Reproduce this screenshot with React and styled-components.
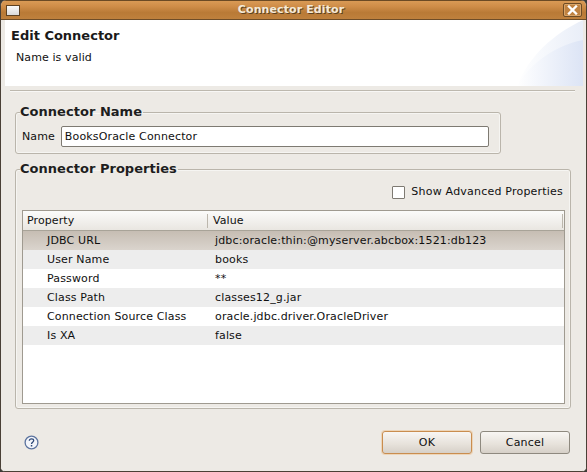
import React from 'react';
import styled, { createGlobalStyle } from 'styled-components';

const Global = createGlobalStyle`
  html, body { margin: 0; padding: 0; background: #3c3b37; }
  * { box-sizing: border-box; }
`;

const Window = styled.div`
  width: 587px; height: 472px; display: flex; flex-direction: column;
  background: #edeae5; font: 11px/14px "DejaVu Sans", sans-serif; color: #101010;
  border-radius: 6px 6px 5px 5px; overflow: hidden;
  border: 1px solid #4a4036; border-top: 0;
`;
const TitleBar = styled.header`
  height: 20px; flex: none; display: flex; align-items: center; justify-content: space-between;
  padding: 0 4px 0 5px; position: relative;
  background: linear-gradient(#d99a55 0, #cf8d48 30%, #b97a36 65%, #bf813d 100%);
  border-top: 1px solid #6b4a24; border-bottom: 1px solid #6e4d28;
`;
const MenuBox = styled.div`
  width: 14px; height: 11px; background: linear-gradient(#fafafa, #d9d9d9); border: 1px solid #5e4222;
`;
const CloseBox = styled.div`
  width: 19px; height: 14px; border: 1px solid #6e4c26; border-radius: 2px; background: #c08240;
  box-shadow: inset 0 0 0 1px #d8a468; display: flex; align-items: center; justify-content: center;
`;
const Title = styled.div`
  position: absolute; left: -5px; right: 0; text-align: center; font-weight: bold; color: #f4ead8;
  text-shadow: 1px 1px 0 #5e4222; letter-spacing: 0.1px; font-size: 11px; top: 2px;
`;
const Body = styled.div`
  flex: 1; display: flex; flex-direction: column; border-left: 3px solid #edeae5; border-right: 3px solid #edeae5; min-height: 0;
`;
const Banner = styled.section`
  height: 66px; flex: none; margin-left: 1px; background: #fff; padding: 8px 6px; position: relative; overflow: hidden;
`;
const BannerArt = styled.svg`
  position: absolute; right: 0; top: 0;
`;
const Heading = styled.h1`
  margin: 0; font: bold 13px/16px "DejaVu Sans", sans-serif; color: #1a1a1a; letter-spacing: 0; position: relative;
`;
const Message = styled.p`
  margin: 7px 0 0 5px; font-size: 11px; line-height: 14px; position: relative; letter-spacing: 0.1px;
`;
const Rule = styled.hr`
  margin: 4px 0 0 6px; width: 565px; height: 2px; border: 0; border-top: 1px solid #bdb8ae; border-bottom: 1px solid #f8f7f5;
`;
const Content = styled.main`
  flex: 1; display: flex; flex-direction: column; padding: 12px 13px 0 11px; min-height: 0;
`;
const Group = styled.fieldset`
  margin: 0; padding: ${p => p.$pad}; border: 1px solid #bab5ab; border-radius: 3px;
  box-shadow: inset 0 0 0 1px #f6f5f2; min-width: 0; width: ${p => p.$width}px; height: ${p => p.$height}px;
  & + & { margin-top: 7px; }
`;
const Legend = styled.legend`
  padding: 0 1px 0 0; margin-left: 4px; font: bold 13px/16px "DejaVu Sans", sans-serif; color: #1e1e1e; letter-spacing: 0.03px;
`;
const NameRow = styled.div`
  display: flex; align-items: center; gap: 7px; padding: 6px 6px 0;
`;
const NameLabel = styled.label`
  font-size: 11px; letter-spacing: 0.1px;
`;
const NameInput = styled.input`
  width: 428px; height: 21px; padding: 0 3px; margin-left: -1px; font: 11px "DejaVu Sans", sans-serif; color: #101010; letter-spacing: 0.15px;
  border: 1px solid #7e7a72; border-radius: 2px; background: #fff; outline: 0;
`;
const CheckRow = styled.label`
  display: flex; justify-content: flex-end; align-items: center; gap: 6px; padding-right: 7px; height: 14px;
`;
const CheckBox = styled.span`
  width: 13px; height: 13px; background: #fff; border: 1px solid #7e7a72; border-radius: 1px; display: block;
`;
const CheckText = styled.span`
  font-size: 11px; letter-spacing: 0.21px;
`;
const Table = styled.div`
  margin: 11px 0 0 6px; width: 543px; height: 194px; background: #fff; border: 1px solid #9f9a90;
`;
const HeaderRow = styled.div`
  display: grid; grid-template-columns: 184px 1fr; height: 20px; align-items: center;
  background: linear-gradient(#fbfbfa, #e9e6e1); border-bottom: 1px solid #a8a398;
`;
const HeaderCell = styled.div`
  padding-left: 4px; height: 14px; line-height: 14px; letter-spacing: 0.1px;
  & + & { border-left: 1px solid #bcb7ad; padding-left: 5px; }
  &:last-child { border-right: 1px solid #bcb7ad; margin-right: 1px; }
`;
const Row = styled.div`
  display: grid; grid-template-columns: 168px 1fr; height: 19px; align-items: center; padding-left: 24px; letter-spacing: 0.15px;
  background: ${p => p.$selected ? 'linear-gradient(#c6bdb3, #dad4cd)' : p.$alt ? '#ededed' : '#fff'};
`;
const Footer = styled.footer`
  flex: none; height: 62px; display: flex; align-items: center; justify-content: space-between; padding: 5px 13px 0 20px;
`;
const HelpIcon = styled.svg`
  display: block;
`;
const Buttons = styled.div`
  display: flex; gap: 8px;
`;
const Button = styled.button`
  width: 90px; height: 23px; padding: 0; font: 11px "DejaVu Sans", sans-serif; color: #101010; letter-spacing: 0.2px;
  background: linear-gradient(#f8f6f3, #e6e1da 60%, #d6d0c8);
  border: 1px solid ${p => p.$primary ? '#c98d4f' : '#8e897f'}; border-radius: 3px;
  box-shadow: ${p => p.$primary ? '0 0 0 1px #edd5b8' : 'none'};
`;

const rows = [
  ['JDBC URL', 'jdbc:oracle:thin:@myserver.abcbox:1521:db123'],
  ['User Name', 'books'],
  ['Password', '**'],
  ['Class Path', 'classes12_g.jar'],
  ['Connection Source Class', 'oracle.jdbc.driver.OracleDriver'],
  ['Is XA', 'false'],
];

export default function App() {
  return (
    <>
      <Global />
      <Window>
        <TitleBar>
          <MenuBox />
          <Title>Connector Editor</Title>
          <CloseBox>
            <svg width="11" height="10" viewBox="0 0 11 10">
              <path d="M2 1.5 9 8.5M9 1.5 2 8.5" stroke="#fff" strokeWidth="2.4" strokeLinecap="square" />
            </svg>
          </CloseBox>
        </TitleBar>
        <Body>
          <Banner>
            <BannerArt width="70" height="66" viewBox="0 0 70 66">
              <defs>
                <linearGradient id="a" x1="0" x2="1" y1="0" y2="0">
                  <stop offset="0" stopColor="#fff" />
                  <stop offset="1" stopColor="#dce4f5" />
                </linearGradient>
                <linearGradient id="b" x1="0" x2="1" y1="0" y2="0">
                  <stop offset="0" stopColor="#fff" />
                  <stop offset="1" stopColor="#e9eef8" />
                </linearGradient>
              </defs>
              <path d="M4 66C16 36 40 14 70 0V66Z" fill="url(#b)" />
              <path d="M4 66C14 48 38 26 70 20V66Z" fill="url(#a)" />
            </BannerArt>
            <Heading>Edit Connector</Heading>
            <Message>Name is valid</Message>
          </Banner>
          <Rule />
          <Content>
            <Group $pad="0" $width={486} $height={51}>
              <Legend>Connector Name</Legend>
              <NameRow>
                <NameLabel>Name</NameLabel>
                <NameInput readOnly value="BooksOracle Connector" />
              </NameRow>
            </Group>
            <Group $pad="8px 0 0" $width={556} $height={252}>
              <Legend>Connector Properties</Legend>
              <CheckRow>
                <CheckBox />
                <CheckText>Show Advanced Properties</CheckText>
              </CheckRow>
              <Table>
                <HeaderRow>
                  <HeaderCell>Property</HeaderCell>
                  <HeaderCell>Value</HeaderCell>
                </HeaderRow>
                {rows.map(([k, v], i) => (
                  <Row key={k} $selected={i === 0} $alt={i % 2 === 1 || i === 3}>
                    <span>{k}</span>
                    <span>{v}</span>
                  </Row>
                ))}
              </Table>
            </Group>
          </Content>
          <Footer>
            <HelpIcon width="15" height="15" viewBox="0 0 15 15">
              <circle cx="7.5" cy="7.5" r="6.4" fill="#f3f5fa" stroke="#5c749f" strokeWidth="1.3" />
              <path d="M5.3 5.8C5.4 4.4 6.4 3.8 7.5 3.8 8.8 3.8 9.7 4.6 9.7 5.6 9.7 7.2 7.5 7.2 7.5 9" fill="none" stroke="#2f4a78" strokeWidth="1.3" />
              <rect x="6.8" y="10" width="1.5" height="1.5" fill="#2f4a78" />
            </HelpIcon>
            <Buttons>
              <Button $primary>OK</Button>
              <Button>Cancel</Button>
            </Buttons>
          </Footer>
        </Body>
      </Window>
    </>
  );
}
